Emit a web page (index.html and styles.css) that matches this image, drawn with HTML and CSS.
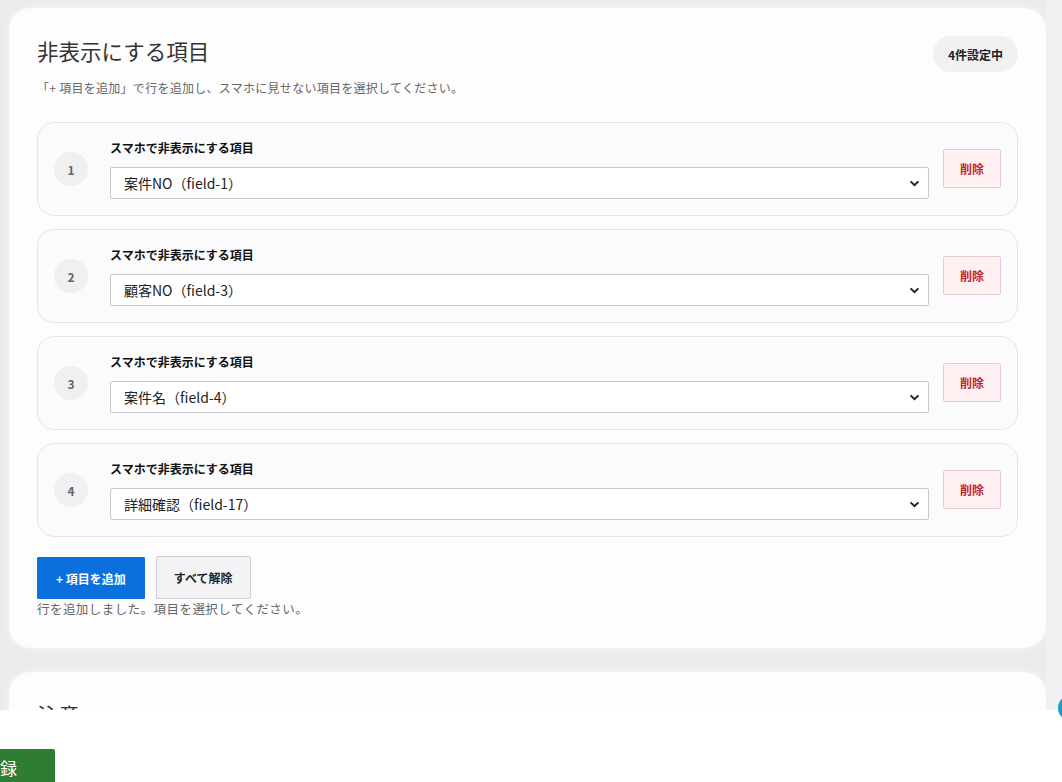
FILE: index.html
```html
<!DOCTYPE html>
<html lang="ja">
<head>
<meta charset="utf-8">
<title>非表示にする項目</title>
<link rel="stylesheet" href="styles.css">
</head>
<body>
<div class="layout">
  <main class="page">
    <section class="card">
      <div class="card-head">
        <h2 class="card-title">非表示にする項目</h2>
        <span class="badge">4件設定中</span>
      </div>
      <p class="desc">「+ 項目を追加」で行を追加し、スマホに見せない項目を選択してください。</p>

      <div class="rows">
        <div class="row">
          <span class="num">1</span>
          <div class="field">
            <label class="field-label">スマホで非表示にする項目</label>
            <select class="select"><option>案件NO（field-1）</option></select>
          </div>
          <button class="btn-del">削除</button>
        </div>
        <div class="row">
          <span class="num">2</span>
          <div class="field">
            <label class="field-label">スマホで非表示にする項目</label>
            <select class="select"><option>顧客NO（field-3）</option></select>
          </div>
          <button class="btn-del">削除</button>
        </div>
        <div class="row">
          <span class="num">3</span>
          <div class="field">
            <label class="field-label">スマホで非表示にする項目</label>
            <select class="select"><option>案件名（field-4）</option></select>
          </div>
          <button class="btn-del">削除</button>
        </div>
        <div class="row">
          <span class="num">4</span>
          <div class="field">
            <label class="field-label">スマホで非表示にする項目</label>
            <select class="select"><option>詳細確認（field-17）</option></select>
          </div>
          <button class="btn-del">削除</button>
        </div>
      </div>

      <div class="actions">
        <button class="btn-add">+&nbsp;項目を追加</button>
        <button class="btn-clear">すべて解除</button>
      </div>
      <p class="status">行を追加しました。項目を選択してください。</p>
    </section>

    <section class="card card-next">
      <div class="card-head">
        <h2 class="card-title">注意</h2>
      </div>
    </section>
  </main>
  <div class="rail"></div>
</div>

<div class="fab"></div>

<footer class="footer">
  <button class="btn-save">登録</button>
</footer>
</body>
</html>
```
FILE: styles.css
```css
* { box-sizing: border-box; }

html, body {
  margin: 0;
  padding: 0;
}

body {
  font-family: "Noto Sans CJK JP", "Noto Sans", sans-serif;
  color: #222;
  background: #ebebed;
  overflow: hidden;
  height: 782px;
}

.layout {
  display: flex;
  min-height: 782px;
}

.page {
  flex: 1;
  padding: 8px 0 0 9px;
  background: #ebebed;
}

.rail {
  width: 16px;
  background: #f1f1f3;
}

.card {
  background: #fdfdfe;
  border-radius: 22px;
  padding: 28px 28px 30px;
  box-shadow: 0 0 10px rgba(255, 255, 255, 0.6);
}

.card-next {
  margin-top: 24px;
  height: 200px;
}

.card-head {
  display: flex;
  align-items: center;
  justify-content: space-between;
  min-height: 36px;
}

.card-title {
  margin: 0;
  font-size: 21.5px;
  font-weight: 400;
  color: #333;
  line-height: 30px;
  position: relative;
  top: -3px;
}

.badge {
  display: inline-flex;
  align-items: center;
  height: 36px;
  padding: 0 15px;
  border-radius: 18px;
  background: #f1f1f4;
  font-size: 12px;
  font-weight: 700;
  color: #222;
}

.desc {
  margin: 7px 0 0;
  font-size: 12px;
  line-height: 18px;
  letter-spacing: 0.28px;
  color: #666;
}

.rows {
  display: flex;
  flex-direction: column;
  gap: 13px;
  margin-top: 25px;
}

.row {
  display: flex;
  align-items: center;
  gap: 22px;
  padding: 16px;
  border: 1px solid #e6e6ea;
  border-radius: 17px;
  background: #fbfbfd;
}

.num {
  width: 34px;
  height: 34px;
  border-radius: 50%;
  background: #f0f0f3;
  display: flex;
  align-items: center;
  justify-content: center;
  font-size: 12px;
  font-weight: 700;
  color: #666;
  flex: none;
}

.field {
  flex: 1;
  display: flex;
  flex-direction: column;
  gap: 10px;
}

.field-label {
  font-size: 12px;
  font-weight: 700;
  line-height: 18px;
  color: #111;
}

.select {
  appearance: none;
  -webkit-appearance: none;
  width: 100%;
  height: 32px;
  border: 1px solid #c9c9cd;
  border-radius: 2px;
  background-color: #fff;
  background-image: url("data:image/svg+xml,%3Csvg xmlns='http://www.w3.org/2000/svg' width='12' height='8' viewBox='0 0 12 8'%3E%3Cpath d='M1.5 1.5 L6 6 L10.5 1.5' fill='none' stroke='%23222' stroke-width='2.2'/%3E%3C/svg%3E");
  background-repeat: no-repeat;
  background-position: right 8px center;
  background-size: 11px 7px;
  padding: 0 30px 0 13px;
  font-family: inherit;
  font-size: 14px;
  color: #222;
}

.btn-del {
  flex: none;
  height: 39px;
  padding: 0 16px;
  border: 1px solid #e8cccd;
  border-radius: 2px;
  background: #fff1f1;
  color: #c4252e;
  font-family: inherit;
  font-size: 12px;
  font-weight: 700;
  margin-left: -8px;
  position: relative;
  top: -1px;
}

.actions {
  display: flex;
  gap: 11px;
  margin-top: 19px;
  align-items: flex-end;
}

.btn-add {
  height: 42px;
  padding: 0 18px;
  border: 1px solid #0b6fde;
  border-radius: 1px;
  background: #0b6fde;
  color: #fff;
  font-family: inherit;
  font-size: 12px;
  font-weight: 700;
}

.btn-clear {
  height: 43px;
  padding: 0 17px;
  border: 1px solid #cdcdd2;
  border-radius: 2px;
  background: #f3f3f6;
  color: #222;
  font-family: inherit;
  font-size: 12px;
  font-weight: 700;
}

.status {
  margin: 1px 0 0;
  font-size: 12.5px;
  line-height: 18px;
  letter-spacing: 0.45px;
  color: #666;
}

.fab {
  position: fixed;
  left: 1058px;
  top: 695px;
  width: 26px;
  height: 26px;
  border-radius: 50%;
  background: #1aa2c6;
  z-index: 5;
}

.footer {
  position: fixed;
  left: 0;
  right: 0;
  bottom: 0;
  height: 72px;
  background: #fff;
  z-index: 4;
}

.btn-save {
  position: absolute;
  left: -55px;
  top: 39px;
  width: 110px;
  height: 44px;
  border: none;
  border-radius: 2px;
  background: #2e7d32;
  color: #fff;
  font-family: inherit;
  font-size: 17px;
  padding: 0 0 8px;
}
```
